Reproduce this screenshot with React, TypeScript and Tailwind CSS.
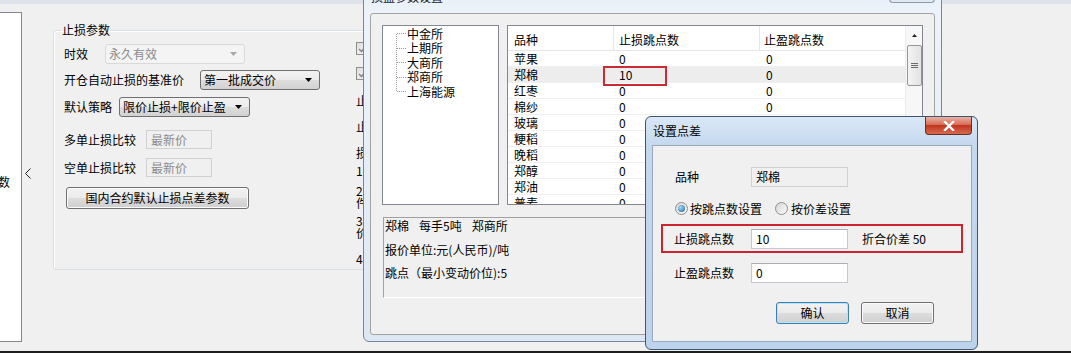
import React from 'react';

const FONT = "font-['Noto_Sans_CJK_SC','Liberation_Sans',sans-serif]";

function Arrow({ color }: { color: string }) {
  return (
    <svg width="7" height="4" viewBox="0 0 7 4">
      <path d="M0 0H7L3.5 4Z" fill={color} />
    </svg>
  );
}

function Combo({ text, w, disabled = false }: { text: string; w: string; disabled?: boolean }) {
  return (
    <div
      className={`${w} flex h-[20px] items-center justify-between rounded-[3px] border pl-[3px] pr-[7px] ${
        disabled
          ? 'border-[#d9d9d9] bg-[#f4f4f4] text-[#8b8b8b]'
          : 'border-[#707070] bg-[linear-gradient(#f3f3f3,#ebebeb_50%,#dddddd_50%,#d2d2d2)]'
      }`}
    >
      <span>{text}</span>
      <Arrow color={disabled ? '#a8a8a8' : '#000'} />
    </div>
  );
}

function Field({ text, w, h, tone = 'normal' }: { text: string; w: string; h: string; tone?: 'normal' | 'disabled' | 'readonly' }) {
  const look =
    tone === 'disabled'
      ? 'border-[#d0d0d0] bg-[#f0f0f0] text-[#8b8b8b]'
      : tone === 'readonly'
        ? 'border-[#d0d0d0] bg-[#f0f0f0] text-black'
        : 'border-[#c5c9cf] border-t-[#abadb3] bg-white';
  return <div className={`${w} ${h} flex items-center border px-[4px] ${look}`}>{text}</div>;
}

function Btn({ text, w, focused = false }: { text: string; w: string; focused?: boolean }) {
  return (
    <div
      className={`${w} flex h-[22px] items-center justify-center rounded-[3px] border bg-[linear-gradient(#f2f2f2,#ebebeb_50%,#dddddd_50%,#cfcfcf)] ${
        focused ? 'border-[#3c7fb1] shadow-[inset_0_0_0_1px_#b7e2fb]' : 'border-[#707070] shadow-[inset_0_0_0_1px_#fbfbfb]'
      }`}
    >
      {text}
    </div>
  );
}

function Check() {
  return (
    <span className="flex h-[13px] w-[13px] items-center justify-center border border-[#8f8f8f] bg-[linear-gradient(135deg,#dedede,#f8f8f8)]">
      <svg width="9" height="8" viewBox="0 0 9 8">
        <path d="M1 4L3.5 6.5L8 1" stroke="#8a8a8a" strokeWidth="1.6" fill="none" />
      </svg>
    </span>
  );
}

function Radio({ checked }: { checked: boolean }) {
  return (
    <span className="flex h-[13px] w-[13px] items-center justify-center rounded-full border border-[#8e8f8f] bg-[linear-gradient(135deg,#d6d6d6,#fbfbfb)]">
      {checked && (
        <span className="h-[7px] w-[7px] rounded-full bg-[radial-gradient(circle_at_35%_35%,#a8dcf8,#1b5d98)]" />
      )}
    </span>
  );
}

function Tree() {
  const items = ['中金所', '上期所', '大商所', '郑商所', '上海能源'];
  const hs = ['h-[15px]', 'h-[14px]', 'h-[15px]', 'h-[14px]', 'h-[15px]'];
  return (
    <div className="relative h-[180px] w-[117px] border border-[#828790] bg-white">
      <svg className="absolute left-[13px] top-0" width="10" height="70" viewBox="0 0 10 70">
        <path
          d="M0.5 8V66M1 7.5H10M1 22.5H10M1 36.5H10M1 51.5H10M1 65.5H10"
          stroke="#9a9a9a"
          strokeDasharray="1 1"
          fill="none"
        />
      </svg>
      <div className="flex flex-col pl-[24px]">
        {items.map((t, i) => (
          <div key={t} className={`${hs[i]} flex items-center`}>
            {t}
          </div>
        ))}
      </div>
    </div>
  );
}

const rows = [
  ['苹果', '0', '0'],
  ['郑棉', '10', '0'],
  ['红枣', '0', '0'],
  ['棉纱', '0', '0'],
  ['玻璃', '0', '0'],
  ['粳稻', '0', '0'],
  ['晚稻', '0', '0'],
  ['郑醇', '0', '0'],
  ['郑油', '0', '0'],
  ['普麦', '0', '0'],
];

function List() {
  return (
    <div className="relative flex h-[180px] w-[416px] border border-[#828790] bg-white">
      <div className="flex w-[397px] flex-col overflow-hidden">
        <div className="flex h-[25px] shrink-0 border-b border-[#e5e5e5]">
          <div className="flex w-[106px] items-center border-r border-[#e5e5e5] pl-[6px] pt-[3px]">品种</div>
          <div className="flex w-[146px] items-center border-r border-[#e5e5e5] pl-[5px] pt-[3px]">止损跳点数</div>
          <div className="flex flex-1 items-center pl-[4px] pt-[3px]">止盈跳点数</div>
        </div>
        {rows.map(([name, sl, tp]) => (
          <div
            key={name}
            className={`flex h-[16px] shrink-0 items-center border-b border-[#f0f0f0] ${name === '郑棉' ? 'bg-[#ededed]' : ''}`}
          >
            <div className="w-[106px] pl-[6px]">{name}</div>
            <div className="w-[146px] pl-[5px]">{sl}</div>
            <div className="flex-1 pl-[6px]">{tp}</div>
          </div>
        ))}
      </div>
      <div className="flex w-[17px] flex-col items-center border-l border-[#ececec] bg-[#f7f7f7]">
        <div className="flex h-[18px] items-center justify-center">
          <svg width="5" height="3" viewBox="0 0 5 3">
            <path d="M2.5 0L5 3H0Z" fill="#222" />
          </svg>
        </div>
        <div className="mt-[1px] flex h-[41px] w-[15px] flex-col items-center justify-center gap-[1px] rounded-[2px] border border-[#979797] bg-[linear-gradient(90deg,#f4f4f4,#e2e2e2)]">
          <span className="h-px w-[7px] bg-[#6a6a6a]" />
          <span className="h-px w-[7px] bg-[#6a6a6a]" />
          <span className="h-px w-[7px] bg-[#6a6a6a]" />
        </div>
      </div>
      <div className="absolute left-[95px] top-[40px] h-[20px] w-[64px] border-2 border-[#cd2a33]" />
    </div>
  );
}

export default function App() {
  return (
    <div className={`relative flex h-[353px] w-[1071px] flex-col overflow-hidden bg-[#f0f0f0] text-[12px] leading-[14px] text-black ${FONT}`}>
      <div className="h-[4px] shrink-0 bg-[#dde2eb]" />
      <div className="flex flex-1 items-start pt-[8px]">
        {/* left tree strip */}
        <div className="flex h-[330px] w-[22px] shrink-0 flex-col overflow-hidden border-y border-r border-[#828790] bg-white">
          <span className="ml-[-2px] mt-[162px]">数</span>
        </div>
        <svg className="ml-[3px] mt-[156px] shrink-0" width="6" height="11" viewBox="0 0 6 11">
          <path d="M5.5 0.5L0.5 5.5L5.5 10.5" stroke="#222" fill="none" />
        </svg>

        {/* 止损参数 group */}
        <fieldset className="ml-[22px] mt-[12px] h-[246px] w-[380px] shrink-0 rounded-[3px] border border-[#d5dfe5] shadow-[inset_1px_1px_0_#fff]">
          <legend className="ml-[7px] px-[1px] leading-[12px]">止损参数</legend>
          <div className="flex">
            <div className="flex w-[302px] flex-col pl-[10px]">
              <div className="mt-[8px] flex items-center gap-[17px]">
                <span>时效</span>
                <Combo text="永久有效" w="w-[140px]" disabled />
              </div>
              <div className="mt-[6px] flex items-center gap-[16px]">
                <span>开仓自动止损的基准价</span>
                <Combo text="第一批成交价" w="w-[120px]" />
              </div>
              <div className="mt-[7px] flex items-center gap-[7px]">
                <span>默认策略</span>
                <Combo text="限价止损+限价止盈" w="w-[131px]" />
              </div>
              <div className="mt-[13px] flex items-center gap-[10px]">
                <span>多单止损比较</span>
                <Field text="最新价" w="w-[66px]" h="h-[19px]" tone="disabled" />
              </div>
              <div className="mt-[9px] flex items-center gap-[10px]">
                <span>空单止损比较</span>
                <Field text="最新价" w="w-[66px]" h="h-[19px]" tone="disabled" />
              </div>
              <div className="ml-[2px] mt-[10px]">
                <Btn text="国内合约默认止损点差参数" w="w-[183px]" />
              </div>
            </div>
            <div className="flex flex-col leading-[12px]">
              <div className="mt-[6px]"><Check /></div>
              <div className="mt-[12px]"><Check /></div>
              <span className="mt-[15px]">止损</span>
              <span className="mt-[14px]">止盈</span>
              <span className="mt-[14px]">损</span>
              <span className="mt-[6px]">1</span>
              <span className="mt-[8px]">2</span>
              <span>件</span>
              <span className="mt-[6px]">3</span>
              <span>价</span>
              <span className="mt-[14px]">4</span>
            </div>
          </div>
        </fieldset>
      </div>
      <div className="h-[2px] shrink-0 bg-[#1e1e1e]" />

      {/* 损盈参数设置 dialog */}
      <div className="absolute left-[363px] top-[-17px] flex h-[359px] w-[579px] flex-col rounded-[6px] border border-[#77879b] bg-[linear-gradient(#e4eef9,#edf3fa_30px,#dce7f3)] px-[6px] pb-[6px]">
        <div className="flex h-[29px] shrink-0 items-start justify-between">
          <span className="ml-[1px] mt-[6px] text-[#222]">损盈参数设置</span>
          <div className="h-[19px] w-[46px] rounded-b-[4px] border border-t-0 border-[#8d99a8] bg-[linear-gradient(#eef3f9,#dfe7f1)]" />
        </div>
        <div className="flex h-[322px] flex-col rounded-[3px] border border-[#a3a3a3] bg-[#f0f0f0]">
          <div className="ml-[11px] mt-[11px] flex gap-[8px]">
            <Tree />
            <List />
          </div>
          <div className="ml-[12px] mt-[12px] flex h-[81px] w-[539px] flex-col border border-b-white border-l-[#a0a0a0] border-r-white border-t-[#a0a0a0] pl-[1px]">
            <div className="mt-[1px] flex gap-[10px]">
              <span>郑棉</span>
              <span>每手5吨</span>
              <span>郑商所</span>
            </div>
            <span className="mt-[10px]">报价单位:元(人民币)/吨</span>
            <span className="mt-[9px]">跳点（最小变动价位):5</span>
          </div>
        </div>
      </div>

      {/* 设置点差 dialog */}
      <div className="absolute left-[645px] top-[116px] flex h-[234px] w-[333px] flex-col rounded-[6px] border border-[#3f5570] bg-[linear-gradient(#dae8f7,#c4d8ee_28px,#bdd2eb)] pb-[7px] pl-[6px] pr-[5px]">
        <div className="flex h-[28px] shrink-0 items-start justify-between">
          <span className="ml-[1px] mt-[7px]">设置点差</span>
          <div className="flex h-[18px] w-[47px] items-center justify-center rounded-b-[4px] border border-t-0 border-[#6f2a22] bg-[linear-gradient(#eab2a4,#d7644e_50%,#c0361f_50%,#d56a4f)]">
            <svg width="12" height="10" viewBox="0 0 12 10">
              <path d="M2 1L10 9M10 1L2 9" stroke="#fff" strokeWidth="2.4" strokeLinecap="square" />
            </svg>
          </div>
        </div>
        <div className="flex flex-1 flex-col border border-[#97a9bf] bg-[#f0f0f0]">
          <div className="ml-[22px] mt-[21px] flex items-center">
            <span className="w-[76px]">品种</span>
            <Field text="郑棉" w="w-[97px]" h="h-[20px]" tone="readonly" />
          </div>
          <div className="ml-[22px] mt-[15px] flex h-[13px] items-center">
            <Radio checked />
            <span className="ml-[2px]">按跳点数设置</span>
            <span className="ml-[13px]"><Radio checked={false} /></span>
            <span className="ml-[3px]">按价差设置</span>
          </div>
          <div className="ml-[8px] mt-[9px] flex h-[29px] w-[302px] items-center border-2 border-[#cc2530] pl-[11px]">
            <span className="w-[77px]">止损跳点数</span>
            <Field text="10" w="w-[97px]" h="h-[20px]" />
            <span className="ml-[14px]">折合价差 50</span>
          </div>
          <div className="ml-[21px] mt-[10px] flex items-center">
            <span className="w-[77px]">止盈跳点数</span>
            <Field text="0" w="w-[97px]" h="h-[20px]" />
          </div>
          <div className="ml-[123px] mt-[19px] flex gap-[12px]">
            <Btn text="确认" w="w-[73px]" focused />
            <Btn text="取消" w="w-[73px]" />
          </div>
        </div>
      </div>
    </div>
  );
}
